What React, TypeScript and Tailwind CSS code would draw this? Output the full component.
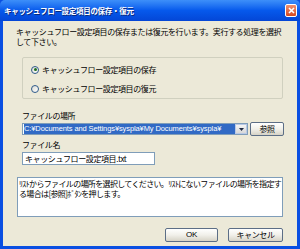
import React from 'react';

const jp = "font-['Noto_Sans_CJK_JP',sans-serif]";

function Radio({ checked }: { checked?: boolean }) {
  return (
    <span className="relative flex h-[8px] w-[8px] items-center justify-center rounded-full border border-[#2F5A8A] bg-gradient-to-br from-[#DCDCD5] to-white">
      {checked && <span className="h-[3px] w-[3px] rounded-full bg-[#1E6E1E]" />}
    </span>
  );
}

function XpButton({ children, className }: { children: React.ReactNode; className: string }) {
  return (
    <div
      className={`flex h-[14px] items-center justify-center rounded-[2px] border border-[#5C6E86] bg-gradient-to-b from-white via-[#F1F0EA] to-[#D6D3C6] text-[8px] text-black ${className}`}
    >
      {children}
    </div>
  );
}

export default function App() {
  return (
    <div className={`flex h-[249px] w-[300px] flex-col overflow-hidden bg-[#0A4FE2] ${jp}`}>
      {/* title bar */}
      <div className="flex h-[21px] items-center justify-between rounded-t-[5px] bg-gradient-to-b from-[#3D8FF9] via-[#0659EC] to-[#0446D6] pl-[4px] pr-[3px]">
        <span className="text-[7.5px] font-bold tracking-[-0.3px] text-white [text-shadow:1px_1px_0_#0A2A7A]">
          キャッシュフロー設定項目の保存・復元
        </span>
        <div className="flex h-[13px] w-[12px] items-center justify-center rounded-[2px] border border-white bg-gradient-to-b from-[#F0906E] to-[#D4471E]">
          <svg width="7" height="7" viewBox="0 0 7 7">
            <path d="M1 1 L6 6 M6 1 L1 6" stroke="white" strokeWidth="1.6" />
          </svg>
        </div>
      </div>

      {/* body */}
      <div className="mx-[3px] flex h-[225px] flex-col bg-[#ECE9D8] text-[8px] tracking-[-0.4px] text-black">
        <div className="ml-[13px] mt-[6px] flex w-[272px] flex-col leading-[10px]">
          <span className="whitespace-nowrap">キャッシュフロー設定項目の保存または復元を行います。実行する処理を選択</span>
          <span>して下さい。</span>
        </div>

        <div className="ml-[19px] mt-[10px] flex h-[42px] w-[261px] flex-col gap-[10px] rounded-[2px] border border-[#D0D0BF] pl-[8px] pt-[7px]">
          <div className="flex h-[9px] items-center gap-[3px] leading-[9px]">
            <Radio checked />
            <span>キャッシュフロー設定項目の保存</span>
          </div>
          <div className="flex h-[9px] items-center gap-[3px] leading-[9px]">
            <Radio />
            <span>キャッシュフロー設定項目の復元</span>
          </div>
        </div>

        <div className="ml-[19px] mt-[12px] h-[9px] leading-[9px]">ファイルの場所</div>
        <div className="ml-[19px] mt-[2px] flex h-[14px] items-center">
          <div className="flex h-[12px] w-[226px] items-center border border-[#7F9DB9] bg-white">
            <div className="ml-[1px] flex h-[10px] flex-1 items-center overflow-hidden whitespace-nowrap bg-[#316AC5] font-['Liberation_Sans',sans-serif] text-[7.5px] tracking-[-0.1px] text-white">
              C:¥Documents and Settings¥syspla¥My Documents¥syspla¥
            </div>
            <div className="flex h-[10px] w-[12px] items-center justify-center border border-[#B9C9E6] bg-gradient-to-b from-[#F5F5F5] to-[#D8D8D8]">
              <svg width="5" height="3" viewBox="0 0 5 3">
                <path d="M0 0 L5 0 L2.5 3 Z" fill="#1E2A44" />
              </svg>
            </div>
          </div>
          <XpButton className="ml-[2px] w-[34px]">参照</XpButton>
        </div>

        <div className="ml-[19px] mt-[4px] h-[9px] leading-[9px]">ファイル名</div>
        <div className="ml-[19px] mt-[3px] flex h-[13px] w-[133px] items-center border border-[#7F9DB9] bg-white pl-[2px]">
          キャッシュフロー設定項目.txt
        </div>

        <div className="ml-[14px] mt-[12px] flex h-[40px] w-[266px] flex-col border border-[#7F9DB9] bg-white pl-[1px] pt-[1px] leading-[10px] tracking-[-0.65px]">
          <span className="whitespace-nowrap">ﾘｽﾄからファイルの場所を選択してください。ﾘｽﾄにないファイルの場所を指定す</span>
          <span className="whitespace-nowrap">る場合は[参照]ﾎﾞﾀﾝを押します。</span>
        </div>

        <div className="mt-[11px] flex">
          <XpButton className="ml-[162px] w-[53px] font-['Liberation_Sans',sans-serif]">OK</XpButton>
          <XpButton className="ml-[10px] w-[55px]">キャンセル</XpButton>
        </div>
      </div>
    </div>
  );
}
